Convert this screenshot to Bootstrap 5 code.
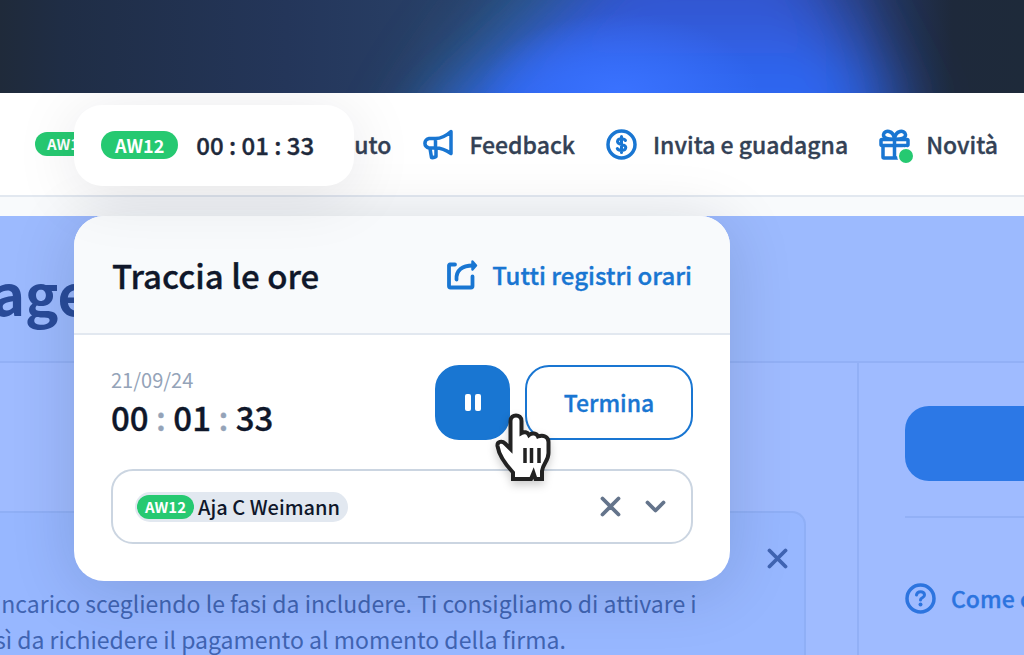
<!DOCTYPE html>
<html lang="it">
<head>
<meta charset="utf-8">
<meta name="viewport" content="width=device-width, initial-scale=1">
<title>Traccia le ore</title>
<link href="https://cdn.jsdelivr.net/npm/bootstrap@5.3.0/dist/css/bootstrap.min.css" rel="stylesheet">
<style>
  :root { --brand: #1976d2; --ink: #0f172a; --slate: #334155; --green: #26c971; }
  body { font-family: "Noto Sans CJK JP", "Noto Sans", sans-serif; font-weight: 500; font-size: 24px; line-height: 36px; color: var(--slate); background: #9fbbff; overflow: hidden; }
  a { text-decoration: none; }
  svg { display: block; flex: none; }
  .semi { -webkit-text-stroke: .35px currentColor; }
  .hero { height: 93px; background: #1f2a3c; z-index: 3; }
  .hero svg { width: 100%; height: 100%; }
  .topbar { height: 104px; padding: 0 26px 0 35px; border-bottom: 2px solid #e2e8f0; }
  .topbar-links { gap: 31px; font-size: 23px; }
  .topbar-links a { color: var(--slate); gap: 16px; }
  .topbar-links svg { color: var(--brand); }
  .strip { height: 19px; background: #f8fafc; }
  .tag { background: var(--green); color: #fff; font-weight: 700; border-radius: 20px; display: inline-block; }
  .tag-sm { font-size: 15px; line-height: 24px; padding: 0 8px; }
  .topbar .tag-sm { padding: 0 12px; }
  .tag-md { font-size: 18px; line-height: 28px; padding: 0 14px; }
  .dot { right: -5px; bottom: -5px; width: 18px; height: 18px; border: 2px solid #fff; background: var(--green); }
  .chip-timer { left: 74px; top: 12px; height: 81px; width: 280px; padding: 0 27px 2px; gap: 18px; border-radius: 28px; box-shadow: 0 8px 64px rgba(15,23,42,.1); color: #1e293b; z-index: 2; }
  .panel { left: 74px; top: 123px; width: 656px; border-radius: 30px; box-shadow: 0 8px 64px rgba(15,23,42,.15); background: #fff; z-index: 1; color: var(--ink); }
  .panel-head { height: 119px; padding: 0 38px; background: #f8fafc; border-bottom: 2px solid #e2e8f0; border-radius: 30px 30px 0 0; }
  .panel-head h2 { font-size: 33px; line-height: 48px; font-weight: 500; }
  .panel-head a { color: var(--brand); gap: 14px; font-size: 24px; }
  .panel-body { padding: 30px 37px 37px; }
  .date { font-size: 20px; line-height: 30px; font-weight: 400; color: #94a3b8; }
  .clock { font-size: 33px; line-height: 45px; }
  .clock span { color: #94a3b8; }
  .btn-tall { height: 75px; border-radius: 24px; font-size: 23px; line-height: 36px; font-weight: 500; border: 2px solid var(--brand); }
  .btn-pair { gap: 15px; }
  .btn-pause { width: 75px; background: var(--brand); }
  .btn-end { width: 168px; color: var(--brand); background: #fff; padding: 0 0 2px; }
  .picker { height: 75px; margin-top: 29px; padding: 0 25px 0 22px; border: 2px solid #cbd5e1; border-radius: 22px; color: #64748b; }
  .person { height: 30px; padding: 0 8px 0 2px; gap: 4px; border-radius: 15px; background: #e2e8f0; color: var(--ink); font-size: 20px; line-height: 30px; }
  .bare { border: 0; background: none; padding: 0; color: inherit; }
  .pointer { left: 420px; top: 196px; filter: drop-shadow(0 4px 4px rgba(0,0,0,.2)); }
  .title-row { height: 147px; padding-top: 36px; background: #9cbafe; border-bottom: 2px solid #92b0f6; }
  .title-row h1 { font-size: 56px; line-height: 80px; font-weight: 700; color: #294b99; margin-left: -8px; }
  .main-col { padding: 148px 51px 0 0; }
  .notice { margin-left: -24px; padding: 35px 16px 0 17px; background: #97b7ff; border: 2px solid #8fafF6; border-bottom: 0; border-radius: 14px 14px 0 0; color: #4064b2; }
  .notice p { font-size: 23px; font-weight: 400; white-space: nowrap; }
  .side-col { width: 167px; padding: 43px 0 0 46px; border-left: 2px solid #92b0f6; overflow: hidden; }
  .cta { height: 75px; border-radius: 24px 0 0 24px; background: #2c78e6; border: 0; }
  .side-col hr { margin: 35px 0 62px; border-top: 2px solid #92b0f6; opacity: 1; }
  .side-col a { color: #2c74df; gap: 15px; white-space: nowrap; font-size: 23px; }
</style>
</head>
<body class="d-flex flex-column vh-100">
<header class="hero position-relative flex-shrink-0">
  <svg viewBox="0 0 1024 93" preserveAspectRatio="none" aria-hidden="true">
    <defs>
      <linearGradient id="base"><stop offset="0" stop-color="#1f2a3a"/><stop offset=".06" stop-color="#1f2d45"/><stop offset=".28" stop-color="#24365a"/><stop offset=".42" stop-color="#283f66"/><stop offset=".84" stop-color="#243868"/><stop offset=".93" stop-color="#1e293b"/><stop offset="1" stop-color="#1e2a3a"/></linearGradient>
      <linearGradient id="glow" x1="0" y1="0" x2="0" y2="1"><stop offset=".3" stop-color="#3156d0"/><stop offset=".62" stop-color="#2f66f0"/></linearGradient>
      <radialGradient id="hot"><stop offset="0" stop-color="#3a72ff"/><stop offset="1" stop-color="#3a72ff" stop-opacity="0"/></radialGradient>
      <filter id="soft" x="-50%" y="-50%" width="200%" height="200%"><feGaussianBlur stdDeviation="38 16"/></filter>
      <filter id="wide" x="-50%" y="-50%" width="200%" height="200%"><feGaussianBlur stdDeviation="30"/></filter>
    </defs>
    <rect width="1024" height="93" fill="url(#base)"/>
    <path d="M380 170L430 80L530 -60L660 -60L560 170Z" fill="#2f6aa8" opacity=".55" filter="url(#wide)"/>
    <path d="M420 170L475 85L560 10L630 -70L800 -70L840 0L878 80L890 170Z" fill="url(#glow)" filter="url(#soft)"/>
    <ellipse cx="620" cy="93" rx="140" ry="80" fill="url(#hot)"/>
  </svg>
</header>

<div class="position-relative flex-shrink-0">
  <nav class="topbar bg-white d-flex align-items-center">
    <span class="tag tag-sm">AW12</span>
    <div class="topbar-links semi d-flex align-items-center ms-auto">
      <a href="#">Aiuto</a>
      <a href="#" class="d-flex align-items-center">
        <svg width="31" height="31" viewBox="0 0 31 31" fill="none" stroke="currentColor" stroke-width="3.500" stroke-linejoin="round" stroke-linecap="round"><path d="M13.500 9.500H7A4.800 4.800 0 0 0 7 19H13.500C19.500 19 24 21 29 24.500V2.500C24 7 19.500 9.500 13.500 9.500ZM13.500 10V18.500M8 19.500L9.500 28.500Q12 29 14 27.500V20"/></svg>
        Feedback</a>
      <a href="#" class="d-flex align-items-center">
        <svg width="31" height="31" viewBox="0 0 31 31" fill="none" stroke="currentColor" stroke-width="3.500" stroke-linecap="round"><circle cx="15.500" cy="15.500" r="13.500"/><path stroke-width="3" d="M19.500 11.500C18.500 9.500 12 8.500 11.500 12.500C11.500 16.500 19.800 14.500 19.800 18.500C19.500 22.500 12.500 22 11.300 19.500M15.500 7.500V23.500"/></svg>
        Invita e guadagna</a>
      <a href="#" class="d-flex align-items-center">
        <span class="position-relative">
          <svg width="31" height="31" viewBox="0 0 31 31" fill="none" stroke="currentColor" stroke-width="3.500" stroke-linejoin="round"><rect x="2" y="10.500" width="27" height="6" rx="1"/><path d="M4 17V28Q4 29 5 29H27V17M15.500 10V29M15.500 10C10 10.500 4 9.500 4.500 5.500C5.500 .5 14.500 1 15.500 10C16.500 1 25.500 .5 26.500 5.500C27 9.500 21 10.500 15.500 10Z"/></svg>
          <span class="dot position-absolute rounded-circle"></span>
        </span>
        Novità</a>
    </div>
  </nav>
  <div class="strip"></div>

  <div class="chip-timer position-absolute bg-white d-flex align-items-center">
    <span class="tag tag-md">AW12</span><span class="semi text-nowrap">00 : 01 : 33</span>
  </div>

  <section class="panel position-absolute">
    <div class="panel-head semi d-flex align-items-center justify-content-between">
      <h2 class="m-0">Traccia le ore</h2>
      <a href="#" class="d-flex align-items-center">
        <svg width="32" height="32" viewBox="0 0 32 32" fill="none" stroke="currentColor" stroke-width="3.800" stroke-linejoin="round" stroke-linecap="round"><path d="M9 5.500H4Q3 5.500 3 6.500V27Q3 28.500 4.500 28.500H25Q26.500 28.500 26.500 27V17.500M10.500 20.500C10 11 16 6.500 27 6.500"/><path d="M26.500 2.500L30 6.500L26.500 10.500Z" stroke-width="2.500" fill="currentColor"/></svg>
        Tutti registri orari</a>
    </div>
    <div class="panel-body">
      <div class="d-flex justify-content-between">
        <div>
          <div class="date">21/09/24</div>
          <div class="clock semi">00 <span>:</span> 01 <span>:</span> 33</div>
        </div>
        <div class="btn-pair d-flex">
          <button type="button" class="btn btn-tall btn-pause d-flex align-items-center justify-content-center p-0" aria-label="Pausa">
            <svg width="16" height="17" viewBox="0 0 16 17" fill="#fff"><rect width="6" height="17" rx="2"/><rect x="10" width="6" height="17" rx="2"/></svg>
          </button>
          <button type="button" class="btn btn-tall btn-end semi">Termina</button>
        </div>
      </div>
      <div class="picker d-flex align-items-center">
        <span class="person d-flex align-items-center me-auto"><span class="tag tag-sm">AW12</span>Aja C Weimann</span>
        <button type="button" class="bare me-4" aria-label="Rimuovi"><svg width="21" height="21" viewBox="0 0 21 21" fill="none" stroke="currentColor" stroke-width="3.800" stroke-linecap="round"><path d="M2.500 2.500L18.500 18.500M18.500 2.500L2.500 18.500"/></svg></button>
        <button type="button" class="bare" aria-label="Apri"><svg width="21" height="21" viewBox="0 0 21 21" fill="none" stroke="currentColor" stroke-width="3.800" stroke-linecap="round" stroke-linejoin="round"><path d="M2.500 6.500L10.500 14.500L18.500 6.500"/></svg></button>
      </div>
    </div>
    <svg class="pointer position-absolute" width="58" height="72" viewBox="0 0 58 72" fill="#fff" stroke="#222" stroke-width="4" stroke-linejoin="miter" aria-hidden="true">
      <path d="M19 67V60.500C12 53 5 44 3.500 34C3 29.500 8 28.500 11 31.500L16.500 37V9C16.500 1.500 27.500 1.500 27.500 9V21C30 19.500 33.500 20 35 23C38 20.500 42.500 21 44 24.500C49 22.500 54.500 24.500 54.500 30V41C54.500 49 49 51 48 59V67H41.500L39.500 61L37 67Z"/>
      <path d="M31 36V51M37.500 36V51M45 36V51" stroke-width="3.500"/>
    </svg>
  </section>
</div>

<main class="d-flex flex-column flex-grow-1 overflow-hidden">
  <div class="title-row flex-shrink-0"><h1 class="mb-0">age</h1></div>
  <div class="d-flex flex-grow-1 overflow-hidden">
    <div class="main-col d-flex flex-column flex-grow-1">
      <div class="notice d-flex flex-column flex-grow-1">
        <button type="button" class="bare align-self-end mb-3" aria-label="Chiudi"><svg width="21" height="21" viewBox="0 0 21 21" fill="none" stroke="currentColor" stroke-width="3.800" stroke-linecap="round"><path d="M2.500 2.500L18.500 18.500M18.500 2.500L2.500 18.500"/></svg></button>
        <p class="mb-0">incarico scegliendo le fasi da includere. Ti consigliamo di attivare i<br>sì da richiedere il pagamento al momento della firma.</p>
      </div>
    </div>
    <aside class="side-col flex-shrink-0">
      <button type="button" class="cta d-block w-100" aria-label="Continua"></button>
      <hr>
      <a href="#" class="semi d-flex align-items-center">
        <svg width="31" height="31" viewBox="0 0 31 31" fill="none" stroke="currentColor" stroke-width="3.500" stroke-linecap="round"><circle cx="15.500" cy="15.500" r="13.500"/><path stroke-width="3" d="M11.500 12C12 7.500 19.500 7.500 19.500 12C19.500 15 15.500 14.500 15.500 17"/><circle cx="15.500" cy="21.500" r="2" fill="currentColor" stroke="none"/></svg>
        Come c</a>
    </aside>
  </div>
</main>
<script src="https://cdn.jsdelivr.net/npm/bootstrap@5.3.0/dist/js/bootstrap.bundle.min.js"></script>
</body>
</html>
